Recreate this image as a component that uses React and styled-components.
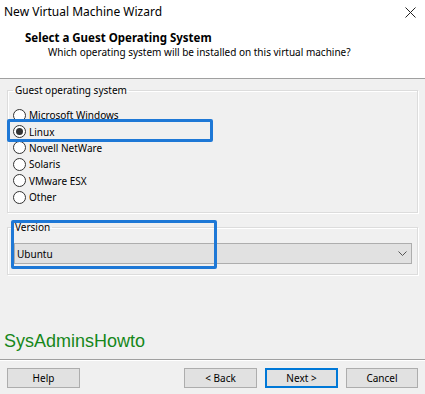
import React from "react";
import styled, { createGlobalStyle } from "styled-components";

const GlobalStyle = createGlobalStyle`
  html, body { margin: 0; padding: 0; background: #f0f0f0; }
  body { font-family: "Noto Sans", "Liberation Sans", sans-serif; font-size: 10px; color: #000; }
`;

const Window = styled.div`
  position: relative;
  width: 425px;
  height: 394px;
  background: #f0f0f0;
  display: flex;
  flex-direction: column;
  overflow: hidden;
`;

const Header = styled.div`
  height: 79px;
  background: #fff;
  border-bottom: 1px solid #a0a0a0;
  box-sizing: border-box;
  display: flex;
  flex-direction: column;
`;

const TitleBar = styled.div`
  height: 24px;
  display: flex;
  align-items: center;
  justify-content: space-between;
  padding: 0 9px 0 4px;
`;

const TitleText = styled.span`
  font-size: 12px;
  line-height: 14px;
`;

const CloseIcon = styled.svg`
  width: 11px;
  height: 11px;
  display: block;
`;

const Heading = styled.div`
  margin: 7px 0 0 25px;
  font-weight: bold;
  font-size: 11.5px;
  line-height: 13px;
`;

const SubHeading = styled.div`
  margin: 2px 0 0 48px;
  font-size: 10px;
  line-height: 13px;
`;

const Body = styled.div`
  padding: 4px 7px 0 7px;
  display: flex;
  flex-direction: column;
  gap: 7px;
`;

const GroupBox = styled.fieldset`
  margin: 0;
  min-width: 0;
  border: 1px solid #dcdcdc;
  box-shadow: inset 1px 1px 0 #fff, 1px 1px 0 #fff;
  padding: 0 5px ${(p) => p.$bottom}px ${(p) => p.$left}px;
`;

const Legend = styled.legend`
  padding: 0 2px 0 ${(p) => p.$pad}px;
  font-size: 10px;
  line-height: 14px;
`;

const RadioList = styled.div`
  margin-top: 10px;
  display: flex;
  flex-direction: column;
`;

const RadioRow = styled.div`
  height: 16.4px;
  display: flex;
  align-items: center;
  gap: 3px;
`;

const RadioCircle = styled.span`
  width: 13px;
  height: 13px;
  box-sizing: border-box;
  border: 1px solid #333;
  border-radius: 50%;
  background: #fff;
  display: flex;
  align-items: center;
  justify-content: center;
  &::after {
    content: "";
    width: 7px;
    height: 7px;
    border-radius: 50%;
    background: ${(p) => (p.$checked ? "#333" : "transparent")};
  }
`;

const RadioLabel = styled.span`
  font-size: 10px;
  line-height: 14px;
`;

const Select = styled.div`
  margin-top: 9px;
  height: 21px;
  box-sizing: border-box;
  border: 1px solid #adadad;
  background: #e1e1e1;
  display: flex;
  align-items: center;
  justify-content: space-between;
  padding: 0 4px 0 2px;
  font-size: 10px;
`;

const Chevron = styled.svg`
  width: 9px;
  height: 6px;
  display: block;
`;

const Watermark = styled.div`
  margin-top: auto;
  padding: 0 0 7px 4px;
  font-family: "Liberation Sans", Arial, sans-serif;
  font-size: 18px;
  line-height: 22px;
  color: #16871a;
`;

const Footer = styled.div`
  height: 35px;
  box-sizing: border-box;
  border-top: 1px solid #a0a0a0;
  box-shadow: inset 0 1px 0 #fff;
  padding: 8px 7px 0 7px;
  display: flex;
  gap: 8px;
`;

const Spacer = styled.div`
  flex: 1;
`;

const Button = styled.button`
  width: ${(p) => p.$w}px;
  height: 20px;
  box-sizing: border-box;
  margin: 0;
  padding: 0;
  font-family: inherit;
  font-size: 10px;
  color: #000;
  background: #e1e1e1;
  border: 1px solid ${(p) => (p.$default ? "#0078d7" : "#adadad")};
  box-shadow: ${(p) => (p.$default ? "inset 0 0 0 1px #0078d7" : "none")};
`;

const Highlight = styled.div`
  position: absolute;
  box-sizing: border-box;
  border: 3px solid #1e78d6;
  border-radius: 2px;
  pointer-events: none;
`;

const systems = [
  "Microsoft Windows",
  "Linux",
  "Novell NetWare",
  "Solaris",
  "VMware ESX",
  "Other",
];

export default function App() {
  return (
    <>
      <GlobalStyle />
      <Window>
        <Header>
          <TitleBar>
            <TitleText>New Virtual Machine Wizard</TitleText>
            <CloseIcon viewBox="0 0 11 11">
              <path d="M0.5 0.5 L10.5 10.5 M10.5 0.5 L0.5 10.5" stroke="#222" strokeWidth="1" fill="none" />
            </CloseIcon>
          </TitleBar>
          <Heading>Select a Guest Operating System</Heading>
          <SubHeading>Which operating system will be installed on this virtual machine?</SubHeading>
        </Header>
        <Body>
          <GroupBox $left={5} $bottom={7}>
            <Legend $pad={2}>Guest operating system</Legend>
            <RadioList>
              {systems.map((s) => (
                <RadioRow key={s}>
                  <RadioCircle $checked={s === "Linux"} />
                  <RadioLabel>{s}</RadioLabel>
                </RadioRow>
              ))}
            </RadioList>
          </GroupBox>
          <GroupBox $left={6} $bottom={10}>
            <Legend $pad={1}>Version</Legend>
            <Select>
              <span>Ubuntu</span>
              <Chevron viewBox="0 0 9 6">
                <path d="M0.5 0.5 L4.5 4.5 L8.5 0.5" stroke="#555" strokeWidth="1" fill="none" />
              </Chevron>
            </Select>
          </GroupBox>
        </Body>
        <Watermark>SysAdminsHowto</Watermark>
        <Footer>
          <Button $w={73}>Help</Button>
          <Spacer />
          <Button $w={73}>&lt; Back</Button>
          <Button $w={73} $default>Next &gt;</Button>
          <Button $w={72}>Cancel</Button>
        </Footer>
        <Highlight style={{ left: 7, top: 119, width: 206, height: 23 }} />
        <Highlight style={{ left: 11, top: 220, width: 206, height: 49 }} />
      </Window>
    </>
  );
}
